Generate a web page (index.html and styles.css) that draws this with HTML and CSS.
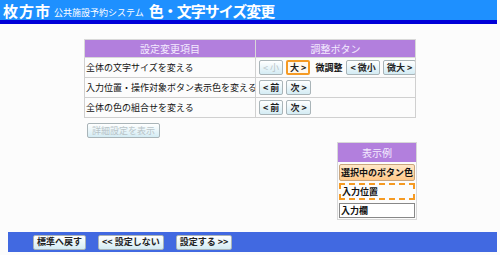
FILE: index.html
```html
<!DOCTYPE html>
<html lang="ja">
<head>
    <meta charset="UTF-8">
    <title>色・文字サイズ変更</title>
    <link rel="stylesheet" href="styles.css">
</head>
<body>
    <header class="title-bar">
        <span class="city">枚方市</span>
        <span class="system">公共施設予約システム</span>
        <span class="page-title">色・文字サイズ変更</span>
    </header>

    <div class="main">
        <table class="settings">
            <tr>
                <th class="col-item">設定変更項目</th>
                <th>調整ボタン</th>
            </tr>
            <tr>
                <td>全体の文字サイズを変える</td>
                <td class="btns">
                    <button class="btn" disabled>&lt; 小</button>
                    <button class="btn selected">大 &gt;</button>
                    <span class="fine">微調整</span>
                    <button class="btn">&lt; 微小</button>
                    <button class="btn">微大 &gt;</button>
                </td>
            </tr>
            <tr>
                <td>入力位置・操作対象ボタン表示色を変える</td>
                <td class="btns">
                    <button class="btn">&lt; 前</button>
                    <button class="btn">次 &gt;</button>
                </td>
            </tr>
            <tr>
                <td>全体の色の組合せを変える</td>
                <td class="btns">
                    <button class="btn">&lt; 前</button>
                    <button class="btn">次 &gt;</button>
                </td>
            </tr>
        </table>

        <button class="btn detail" disabled>詳細設定を表示</button>

        <div class="sample">
            <div class="sample-head">表示例</div>
            <div class="sample-btn">選択中のボタン色</div>
            <div class="sample-focus">入力位置</div>
            <div class="sample-input">入力欄</div>
        </div>
    </div>

    <footer class="footer-bar">
        <button class="btn">標準へ戻す</button>
        <button class="btn">&lt;&lt; 設定しない</button>
        <button class="btn">設定する &gt;&gt;</button>
    </footer>
</body>
</html>
```

FILE: styles.css
```css
body {
    margin: 0;
    background-color: #fcfcfc;
    font-family: "Noto Sans CJK JP", sans-serif;
    color: #111;
}
.title-bar {
    width: 494px;
    height: 20px;
    padding-left: 3px;
    background-color: #1e90ff;
    border-bottom: 4px solid #0000d8;
    color: white;
    display: flex;
    align-items: center;
    white-space: nowrap;
}
.city {
    font-size: 15px;
    font-weight: bold;
    line-height: 1;
    letter-spacing: 1px;
}
.system {
    font-size: 9px;
    line-height: 1;
    margin: 4px 5px 0 3px;
}
.page-title {
    font-size: 15px;
    font-weight: bold;
    line-height: 1;
    letter-spacing: -1px;
}
.main {
    padding-left: 84px;
    padding-top: 15px;
    height: 193px;
}
.settings {
    border-collapse: collapse;
    table-layout: fixed;
    width: 332px;
    font-size: 9px;
}
.settings th {
    background-color: #b27fdd;
    color: #f4ecff;
    font-weight: normal;
    font-size: 10px;
    height: 17px;
    padding: 0;
    border: 1px solid #d8d8d8;
}
.settings .col-item {
    width: 170px;
}
.settings td {
    height: 19px;
    padding: 0 0 0 1px;
    border: 1px solid #d0d0d0;
    white-space: nowrap;
    overflow: hidden;
}
.settings td.btns {
    padding-left: 3px;
}
.btn {
    font-family: "Noto Sans CJK JP", sans-serif;
    font-size: 9px;
    font-weight: bold;
    line-height: 12px;
    height: 15px;
    padding: 0 3px;
    margin: 0 1px 0 0;
    border: 1px solid #a9b4b8;
    border-radius: 2px;
    background: linear-gradient(#ffffff, #d4ecf4);
    color: #222;
    vertical-align: middle;
}
.btn:disabled {
    color: #b9c4c8;
    font-weight: normal;
}
.btn.selected {
    border: 2px solid #f59a23;
    background: #fff8ee;
    padding: 0 2px;
}
.fine {
    font-weight: bold;
    margin: 0 2px;
    vertical-align: middle;
}
.detail {
    margin: 5px 0 0 3px;
    padding: 0 4px;
    height: 15px;
    display: block;
}
.sample {
    margin: 4px 0 0 253px;
    width: 78px;
    border: 1px solid #d8d8d8;
    font-size: 9px;
}
.sample-head {
    background-color: #b27fdd;
    color: #f4ecff;
    font-size: 10px;
    text-align: center;
    height: 19px;
    line-height: 19px;
}
.sample-btn {
    margin: 2px 1px 0 1px;
    height: 15px;
    line-height: 15px;
    border: 1px solid #c9a57d;
    border-radius: 2px;
    background: linear-gradient(#ffe8c8, #ffc98a);
    font-weight: bold;
    text-align: center;
    white-space: nowrap;
}
.sample-focus {
    margin: 2px 1px 0 1px;
    height: 13px;
    line-height: 13px;
    border: 2px dashed #f59a23;
    font-weight: bold;
    padding-left: 1px;
}
.sample-input {
    margin: 3px 1px 1px 1px;
    height: 13px;
    line-height: 13px;
    border: 1px solid #888;
    background: white;
    font-weight: bold;
    padding-left: 1px;
}
.footer-bar {
    margin-left: 8px;
    width: 464px;
    height: 20px;
    padding-left: 25px;
    background-color: #4169e1;
    display: flex;
    align-items: center;
    gap: 11px;
}
.footer-bar .btn {
    height: 15px;
    padding: 0 3px;
}
```
